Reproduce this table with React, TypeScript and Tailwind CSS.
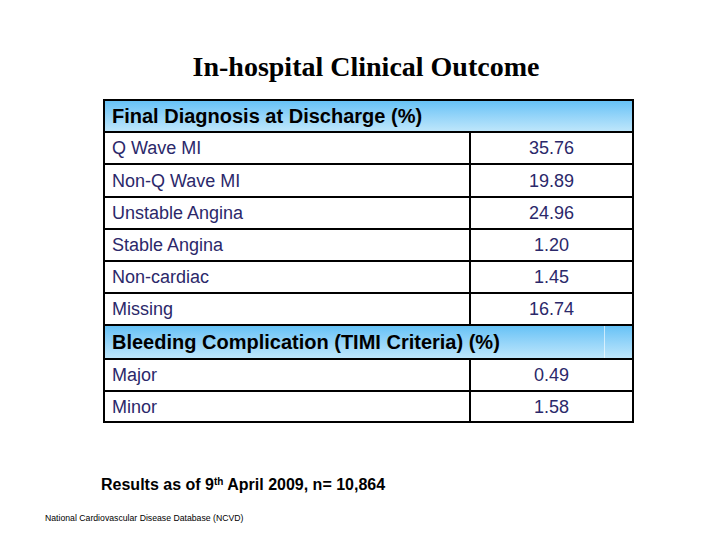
import React from "react";

const diag: [string, string, string][] = [
  ["Q Wave MI", "35.76", "h-[32px]"],
  ["Non-Q Wave MI", "19.89", "h-[33px]"],
  ["Unstable Angina", "24.96", "h-[32px]"],
  ["Stable Angina", "1.20", "h-[32px]"],
  ["Non-cardiac", "1.45", "h-[32px]"],
  ["Missing", "16.74", "h-[32px]"],
];
const bleed: [string, string, string][] = [
  ["Major", "0.49", "h-[32px]"],
  ["Minor", "1.58", "h-[31px]"],
];

function Row({ label, value, h }: { label: string; value: string; h: string }) {
  return (
    <div className={`flex ${h} border-b-2 border-black`}>
      <div className="w-[366px] border-r-2 border-black pl-[7px] flex items-center text-[18px] text-[#2b286a]">
        {label}
      </div>
      <div className="flex-1 flex items-center justify-center text-[18px] text-[#2b286a]">
        {value}
      </div>
    </div>
  );
}

function Header({ text, line, h }: { text: string; line?: boolean; h: string }) {
  return (
    <div className={`relative ${h} border-b-2 border-black bg-gradient-to-b from-[#66c2f6] to-[#bde6fb] pl-[7px] flex items-center text-[20px] font-bold text-black`}>
      {text}
      {line && <div className="absolute right-[27px] top-0 bottom-0 w-px bg-white/60" />}
    </div>
  );
}

export default function App() {
  return (
    <div className="w-[720px] h-[540px] bg-white relative" style={{ fontFamily: '"Liberation Sans", Arial, sans-serif' }}>
      <div className="pt-[50px] flex justify-center">
        <h1 className="text-[28px] font-bold leading-[34px] text-black ml-[12px]" style={{ fontFamily: '"Liberation Serif", "Times New Roman", serif' }}>
          In-hospital Clinical Outcome
        </h1>
      </div>
      <div className="ml-[103px] mt-[15px] w-[531px] border-t-2 border-l-2 border-r-2 border-black leading-none">
        <Header text="Final Diagnosis at Discharge (%)" h="h-[32px]" />
        {diag.map(([l, v, h]) => (
          <Row key={l} label={l} value={v} h={h} />
        ))}
        <Header text="Bleeding Complication (TIMI Criteria) (%)" line h="h-[34px]" />
        {bleed.map(([l, v, h]) => (
          <Row key={l} label={l} value={v} h={h} />
        ))}
      </div>
      <div className="ml-[101px] mt-[54px] text-[16px] font-bold text-black leading-none">
        Results as of 9<sup className="text-[10px] font-bold">th</sup> April 2009, n= 10,864
      </div>
      <div className="ml-[45px] mt-[21px] text-[8.7px] text-black leading-none">
        National Cardiovascular Disease Database (NCVD)
      </div>
    </div>
  );
}
